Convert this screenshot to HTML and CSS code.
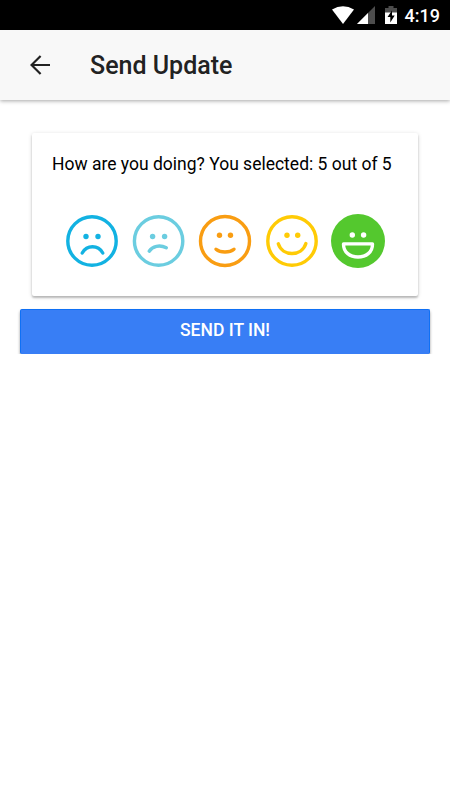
FILE: index.html
```
<!DOCTYPE html>
<html lang="en">
<head>
  <meta charset="UTF-8" />
  <meta name="viewport" content="width=device-width, initial-scale=1.0" />
  <title>Send Update</title>
  <link rel="stylesheet" href="styles.css">
</head>
<body>
  <div class="status-bar">
    <svg class="wifi" width="22" height="18" viewBox="0 0 22 18">
      <path d="M0 3.5Q11-3 22 3.5L11 18Z" fill="#fff" />
    </svg>
    <svg class="signal" width="18" height="18" viewBox="0 0 18 18">
      <path d="M18 0V18H0Z" fill="#4d4d4d" />
      <path d="M11 7V18H0Z" fill="#fff" />
    </svg>
    <svg class="battery" width="12" height="18" viewBox="0 0 12 18">
      <path d="M0 2H3.5V0H8.5V2H12V7H0Z" fill="#4d4d4d" />
      <path d="M0 6.5H12V18H0Z" fill="#fff" />
      <path d="M7 4.5L2.5 11H5.3V16.5L9.7 9.5H7Z" fill="#000" />
    </svg>
    <span class="clock">4:19</span>
  </div>

  <header class="toolbar">
    <svg class="back" width="20" height="20" viewBox="0 0 20 20">
      <path d="M10.6 1L1.5 10L10.6 19M1.5 10H20" />
    </svg>
    <h1>Send Update</h1>
  </header>

  <main class="content">
    <section class="card">
      <p>How are you doing? You selected: 5 out of 5</p>
      <div class="faces">
        <svg class="face awful" viewBox="0 0 54 54">
          <circle class="line" cx="27" cy="27" r="24.2" />
          <circle class="eye" cx="21" cy="22.5" r="2.7" />
          <circle class="eye" cx="33" cy="22.5" r="2.7" />
          <path class="line" d="M17.2 39C22 30.7 33 30.7 37.8 39" />
        </svg>
        <svg class="face bad" viewBox="0 0 54 54">
          <circle class="line" cx="26.6" cy="27" r="24.2" />
          <circle class="eye" cx="20.6" cy="22.5" r="2.7" />
          <circle class="eye" cx="32.6" cy="22.5" r="2.7" />
          <path class="line" d="M17.2 37.2C20.4 32.3 27.6 30.3 34.3 33.8" />
        </svg>
        <svg class="face okay" viewBox="0 0 54 54">
          <circle class="line" cx="27" cy="27" r="24.5" />
          <circle class="eye" cx="21.5" cy="21.3" r="2.7" />
          <circle class="eye" cx="32.5" cy="21.3" r="2.7" />
          <path class="line" d="M18 35.2C22.5 39 31.5 39 36 35.2" />
        </svg>
        <svg class="face good" viewBox="0 0 54 54">
          <circle class="line" cx="27" cy="27" r="24.2" />
          <circle class="eye" cx="22" cy="21.3" r="2.7" />
          <circle class="eye" cx="32.7" cy="21.3" r="2.7" />
          <path class="line" d="M13.3 29.8C17.5 42.8 36.5 42.8 40.9 29.5" />
        </svg>
        <svg class="face great" viewBox="0 0 54 54">
          <circle class="fill" cx="27" cy="27" r="27" />
          <circle class="eye" cx="21.3" cy="21" r="2.7" />
          <circle class="eye" cx="32.6" cy="21" r="2.7" />
          <path class="line" d="M12.5 29.9H41.5C41.5 38.5 35 43 27 43S12.5 38.5 12.5 29.9Z" />
        </svg>
      </div>
    </section>
    <button type="button">SEND IT IN!</button>
  </main>
</body>
</html>
```

FILE: styles.css
```
body {
  margin: 0;
  background-color: #fff;
  color: #000;
  font-family: Roboto, sans-serif;
}
.status-bar {
  display: flex;
  align-items: center;
  box-sizing: border-box;
  height: 30px;
  padding: 0 10px 0 332px;
  background-color: #000;
  color: #fff;
}
.signal {
  margin-left: 3px;
}
.battery {
  margin-left: 10px;
}
.clock {
  margin-left: auto;
  padding-top: 2px;
  font-size: 18px;
  font-weight: 500;
  line-height: 28px;
  white-space: nowrap;
}
.toolbar {
  display: flex;
  align-items: center;
  height: 70px;
  padding-left: 30px;
  background-color: #f8f8f8;
  box-shadow: 0 1px 4px rgba(0, 0, 0, 0.35);
}
.back {
  fill: none;
  stroke: #222;
  stroke-width: 2.2;
}
h1 {
  margin: 0 0 0 40px;
  padding-top: 2px;
  color: #222;
  font-size: 25px;
  font-weight: 500;
  line-height: 30px;
}
.content {
  padding: 33px 20px 0;
}
.card {
  box-sizing: border-box;
  height: 163px;
  margin: 0 12px 13px;
  padding: 21px 20px 0;
  border-radius: 2px;
  background-color: #fff;
  box-shadow: 0 2px 2px rgba(0, 0, 0, 0.2), 0 1px 4px rgba(0, 0, 0, 0.16);
}
.card p {
  margin: 0;
  font-size: 17.5px;
  line-height: 20px;
  white-space: nowrap;
}
.faces {
  display: flex;
  gap: 12.5px;
  padding: 39.5px 0 0 13px;
}
.face {
  flex: none;
  width: 54px;
  height: 54px;
}
.line {
  fill: none;
  stroke: currentColor;
  stroke-width: 3.4;
  stroke-linecap: round;
  stroke-linejoin: round;
}
.eye {
  fill: currentColor;
}
.awful {
  color: #12b2e2;
}
.bad {
  color: #6bcde0;
}
.okay {
  color: #f99d12;
}
.good {
  color: #ffcb05;
}
.great {
  color: #fff;
}
.fill {
  fill: #54c82e;
}
button {
  display: block;
  width: 100%;
  height: 45px;
  padding: 0 0 3px;
  border: 1px solid #0f70f5;
  border-bottom-color: #387ef5;
  border-radius: 2px;
  background-color: #387ef5;
  box-shadow: 0 2px 3px rgba(0, 0, 0, 0.4);
  color: #fff;
  font-family: inherit;
  font-size: 17.5px;
  font-weight: 500;
}
```
